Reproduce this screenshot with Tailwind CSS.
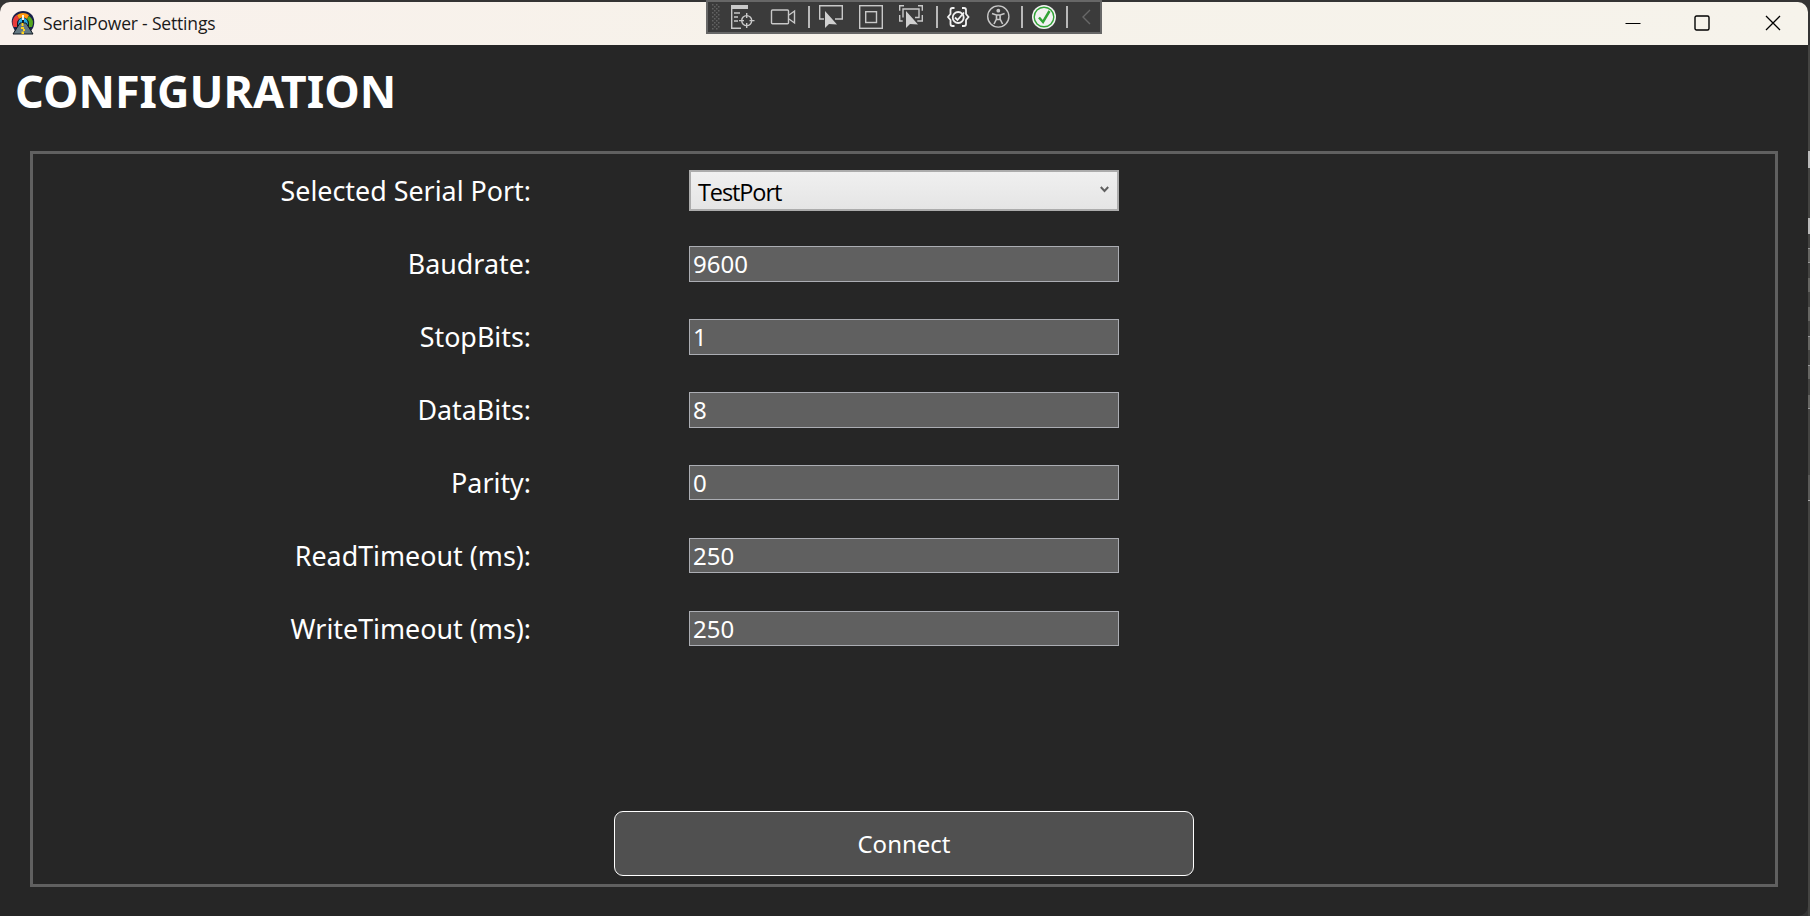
<!DOCTYPE html>
<html lang="en">
<head>
<meta charset="utf-8">
<title>SerialPower - Settings</title>
<script src="https://cdn.jsdelivr.net/npm/@tailwindcss/browser@4"></script>
</head>
<body class="relative h-[916px] w-[1810px] overflow-hidden bg-[#343434] pt-[2px] font-['Noto_Sans',sans-serif] text-white">
<main class="flex h-[914px] w-[1808px] flex-col overflow-hidden rounded-t-[10px] rounded-br-[10px] bg-[#262626]">
  <header class="flex h-[43px] shrink-0 items-center bg-linear-to-r from-[#f9f1ec] via-[#f6f2ea] to-[#f6f3eb] pb-[2px] pl-[11px]">
    <svg class="h-6 w-6 shrink-0" viewBox="0 0 24 24">
      <path d="M2 16C-2 7 4 0 12 0S26 7 22 17L20 20H4Z" fill="#18204a"/>
      <path d="M2.500 16C0 10 3 5 6 4L8 8Q5 12 7 16Z" fill="#e93b3b"/>
      <path d="M6 4Q12 0 18 4L16 8Q12 5 8 8Z" fill="#ff9811"/>
      <path d="M18 5Q24 9 21 16H17Q19 12 16 8Z" fill="#54a51d"/>
      <path d="M6 16Q5 8 12 6Q19 8 18 16Z" fill="#101b24"/>
      <path d="M7 14Q7 8 11 7V13ZM13 7Q17 8 17 14L13 13Z" fill="#28a8e0"/>
      <path d="M11 4h2v5h-2Z" fill="#f6f2ea"/>
      <path d="M9 12h6l7 11H2Z" fill="#647983" stroke="#111820"/>
      <path d="M10.500 12h2v3h-2zM10 16h3v2h-3zM12 18h2v2h-2zM10.500 20.500h2.500v2.500h-2.500z" fill="#ffd21c"/>
    </svg>
    <h1 class="ml-2 whitespace-nowrap font-['Open_Sans',sans-serif] text-[17.5px] leading-6 tracking-[-0.18px] text-[#1b1a19]">SerialPower - Settings</h1>
    <div class="ml-auto flex items-center pr-[27px] text-black">
      <svg class="h-4 w-4" viewBox="0 0 16 16"><path d="M.5 8.500h15" stroke="currentColor"/></svg>
      <svg class="ml-[53px] h-4 w-4" viewBox="0 0 16 16" fill="none"><rect x="1" y="1" width="14" height="14" rx="1.5" stroke="currentColor" stroke-width="1.4"/></svg>
      <svg class="ml-[55px] h-4 w-4" viewBox="0 0 16 16"><path d="M1 1l14 14M15 1l-14 14" stroke="currentColor" stroke-width="1.3"/></svg>
    </div>
  </header>
  <h2 class="mt-[16px] ml-[15px] h-[61px] text-[44.9px] leading-[60px] font-bold whitespace-nowrap">CONFIGURATION</h2>
  <section class="mt-[29px] ml-[30px] flex h-[736px] w-[1748px] shrink-0 flex-col items-center border-[3px] border-[#606060]">
    <form class="mt-[16px] grid w-full grid-cols-[498px_430px] gap-x-[158px] text-[26.85px]">
      <label class="h-[76px] pt-[3px] text-right leading-[36px] whitespace-nowrap">Selected Serial Port:</label>
      <div class="flex h-[41px] items-center justify-between border-2 border-[#acacac] bg-linear-to-b from-[#f0f0f0] to-[#e5e5e5] pl-[7px] pr-[8px] text-black">
        <span class="pt-[3px] font-['Open_Sans',sans-serif] text-[23.5px] leading-8 tracking-[-1.1px]">TestPort</span>
        <svg class="mb-[3px] h-[8px] w-[9px]" viewBox="0 0 9 8" fill="none"><path d="M.8 2l3.7 4 3.7-4" stroke="#606060" stroke-width="2"/></svg>
      </div>
      <label class="h-[73px] text-right leading-[36px]">Baudrate:</label>
      <div class="h-[36px] border border-[#abadb3] bg-[#606060] pl-[3px] text-[24px] leading-[33px]">9600</div>
      <label class="h-[73px] text-right leading-[36px]">StopBits:</label>
      <div class="h-[36px] border border-[#abadb3] bg-[#606060] pl-[3px] text-[24px] leading-[33px]">1</div>
      <label class="h-[73px] text-right leading-[36px]">DataBits:</label>
      <div class="h-[36px] border border-[#abadb3] bg-[#606060] pl-[3px] text-[24px] leading-[33px]">8</div>
      <label class="h-[73px] text-right leading-[36px]">Parity:</label>
      <div class="h-[35px] border border-[#abadb3] bg-[#606060] pl-[3px] text-[24px] leading-[33px]">0</div>
      <label class="h-[73px] text-right leading-[36px] whitespace-nowrap">ReadTimeout (ms):</label>
      <div class="h-[35px] border border-[#abadb3] bg-[#606060] pl-[3px] text-[24px] leading-[33px]">250</div>
      <label class="h-[36px] text-right leading-[36px] whitespace-nowrap">WriteTimeout (ms):</label>
      <div class="h-[35px] border border-[#abadb3] bg-[#606060] pl-[3px] text-[24px] leading-[33px]">250</div>
    </form>
    <button class="mt-auto mb-[8px] h-[65px] w-[580px] rounded-[9px] border border-white bg-[#505050] text-[24px]">Connect</button>
  </section>
</main>
<div class="absolute top-0 left-[706px] flex h-[34px] w-[396px] border-2 border-[#676767] bg-[#3b3b3b]">
  <svg class="h-[30px] w-[392px]" viewBox="708 2 392 30" fill="none" stroke="#c8c8c8" stroke-width="1.4">
    <defs><pattern id="grip" x="712" y="4" width="4" height="4" patternUnits="userSpaceOnUse"><path d="M0 0h1.5v1.5h-1.5zM2 2h1.5v1.5h-1.5z" fill="#626262" stroke="none"/></pattern></defs>
    <rect x="712" y="4" width="8" height="26" fill="url(#grip)" stroke="none"/>
    <path d="M731 5h17v4h-17z" fill="#c8c8c8" stroke="none"/>
    <path d="M731.7 8v20.2H741M734 13h6M734 17h4M734 21h4"/>
    <circle cx="746.7" cy="20.6" r="5"/><path d="M746.7 13v5M746.7 23v5M739 20.6h5M749.5 20.6h5"/>
    <rect x="771.5" y="10" width="17" height="13.8" rx="1"/><path d="M789 15l5.5-4v12l-5.5-4"/>
    <path d="M809 6v22M937 6v22M1022 6v22M1067 6v22" stroke="#b9b9b9" stroke-width="2"/>
    <path d="M824 19h-4.3V5.7h22.6V19H835"/><path d="M825 11v17l4-4 8 .5z" fill="#d0d0d0" stroke="none"/>
    <rect x="859.7" y="5.7" width="22.6" height="22.6"/><rect x="865.7" y="11.7" width="10.8" height="10.8"/>
    <path d="M904 5.7h-4.3v5M899.7 15v6h3M918 5.7h4.3v5M922.3 15v6h-5M903 17.5V9h16v8.500h-4"/><path d="M906 11v17l4-4 8 .5z" fill="#d0d0d0" stroke="none"/>
    <g stroke="#f2f2f2" stroke-width="1.8"><path d="M954.500 8h-2q-2 0-2 2v4l-2.500 3 2.500 3v4q0 2 2 2h2M962 8h2q2 0 2 2v4l2.500 3-2.500 3v4q0 2-2 2h-2"/><circle cx="958.200" cy="17.500" r="5.500"/><path d="M955 17.500l2.500 2.500 6.500-7.500"/></g>
    <circle cx="998.300" cy="16.500" r="10.600"/><circle cx="998.300" cy="10.700" r="1.900" fill="#c8c8c8" stroke="none"/><path d="M992 13.500l4.500 1.500v4l-2.500 5M1004.600 13.500l-4.500 1.500v4l2.500 5M996 15h4.500M996.500 19.500h3.500" stroke-width="1.600"/>
    <circle cx="1044" cy="17" r="12" fill="#f2f2f2" stroke="none"/><circle cx="1044" cy="17" r="9.800" stroke="#31a336" stroke-width="1.400"/><path d="M1039 17.500l4 4.500 6.500-11" stroke="#31a336" stroke-width="2.500"/>
    <path d="M1090 10l-7 7 7 7" stroke="#686868"/>
  </svg>
</div>
<div class="absolute top-[45px] right-0 flex h-[871px] w-[2px] flex-col bg-[#444442]">
  <div class="mt-[106px] h-[17px] bg-[#bababa]"></div>
  <div class="mt-[50px] h-[16px] bg-[#bababa]"></div>
  <div class="mt-[14px] h-[15px] border-y border-[#999] bg-[#666663]"></div>
  <div class="mt-[15px] h-[14px] bg-[#666663]"></div>
  <div class="mt-[15px] h-[14px] bg-[#666663]"></div>
  <div class="mt-[15px] h-[14px] border-t border-[#999] bg-[#666663]"></div>
  <div class="mt-[15px] h-[14px] border-t border-[#999] bg-[#666663]"></div>
  <div class="mt-[16px] h-[14px] border-b border-[#999] bg-[#666663]"></div>
  <div class="mt-[66px] h-[26px] border-b border-[#aaa] bg-[#5a5a58]"></div>
</div>
</body>
</html>
